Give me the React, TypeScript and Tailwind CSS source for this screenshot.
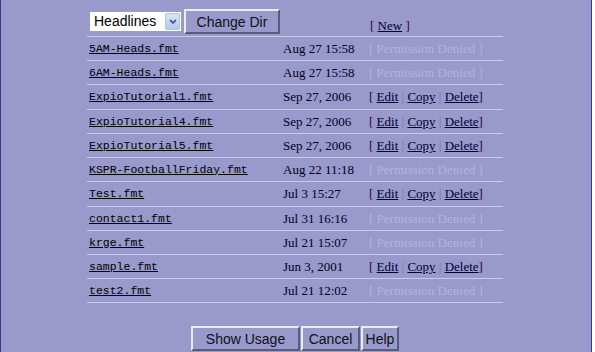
import React from "react";

type Row = { name: string; date: string; editable: boolean };

const rows: Row[] = [
  { name: "5AM-Heads.fmt", date: "Aug 27 15:58", editable: false },
  { name: "6AM-Heads.fmt", date: "Aug 27 15:58", editable: false },
  { name: "ExpioTutorial1.fmt", date: "Sep 27, 2006", editable: true },
  { name: "ExpioTutorial4.fmt", date: "Sep 27, 2006", editable: true },
  { name: "ExpioTutorial5.fmt", date: "Sep 27, 2006", editable: true },
  { name: "KSPR-FootballFriday.fmt", date: "Aug 22 11:18", editable: false },
  { name: "Test.fmt", date: "Jul 3 15:27", editable: true },
  { name: "contact1.fmt", date: "Jul 31 16:16", editable: false },
  { name: "krge.fmt", date: "Jul 21 15:07", editable: false },
  { name: "sample.fmt", date: "Jun 3, 2001", editable: true },
  { name: "test2.fmt", date: "Jul 21 12:02", editable: false },
];

const times = "font-['Liberation_Serif','Times_New_Roman',serif]";
const mono = "font-['Liberation_Mono','Courier_New',monospace]";
const arial = "font-['Liberation_Sans',Arial,sans-serif]";

function Btn({ label, w }: { label: string; w: string }) {
  return (
    <button
      className={`${w} h-[25px] bg-[#9999cc] border-2 border-t-[#ececf8] border-l-[#ececf8] border-b-[#5a5a7a] border-r-[#5a5a7a] ${arial} text-[14px] text-[#111] leading-none flex items-center justify-center`}
    >
      {label}
    </button>
  );
}

export default function App() {
  return (
    <div className="w-[595px] h-[352px] bg-white">
      <div className="w-[592px] h-[352px] bg-[#9999cc] border-l border-r border-[#3a3a8a] flex flex-col">
        <div className="ml-[86px] w-[416px]">
          {/* header row */}
          <div className="h-[37px] flex border-b border-[#cacaea]">
            <div className="w-[196px] flex items-start pt-[9px] pl-[2px]">
              <div className="mt-[2px] w-[93px] h-[21px] bg-white border border-[#a0a0b0] flex items-center relative">
                <span className={`${arial} text-[14px] text-black pl-[4px]`}>Headlines</span>
                <div className="absolute right-[1px] top-[1px] w-[15px] h-[17px] bg-gradient-to-b from-[#d8e4fc] to-[#b4c8f4] border border-[#b0c4ee] rounded-[2px] flex items-center justify-center">
                  <svg width="8" height="6" viewBox="0 0 8 6">
                    <path d="M1 1 L4 4 L7 1" stroke="#4d6185" strokeWidth="1.8" fill="none" />
                  </svg>
                </div>
              </div>
              <div className="ml-[2px]">
                <Btn label="Change Dir" w="w-[96px] h-[23px]" />
              </div>
            </div>
            <div className="w-[86px]" />
            <div className={`flex-1 flex items-end pb-[1px] pl-[1px] ${times} text-[13px]`}>
              <span className="text-[#330033]">[&nbsp;</span>
              <span className="underline text-[#000033]">New</span>
              <span className="text-[#330033]">&nbsp;]</span>
            </div>
          </div>
          {rows.map((r, i) => (
            <div
              key={r.name}
              className={`${i === 2 || i === 6 ? "h-[25px]" : "h-[24px]"} flex items-center border-b border-[#cacaea]`}
            >
              <div className={`w-[196px] pl-[2px] ${mono} text-[11.5px] text-black underline`}>{r.name}</div>
              <div className={`w-[86px] ${times} text-[13px] text-[#000022] whitespace-nowrap`}>{r.date}</div>
              <div className={`flex-1 ${times} text-[13px] whitespace-nowrap`}>
                {r.editable ? (
                  <>
                    <span className="text-[#330033]">[ </span>
                    <span className="underline text-[#000033]">Edit</span>
                    <span className="text-[#7777aa]"> | </span>
                    <span className="underline text-[#000033]">Copy</span>
                    <span className="text-[#7777aa]"> | </span>
                    <span className="underline text-[#000033]">Delete</span>
                    <span className="text-[#330033]">]</span>
                  </>
                ) : (
                  <span className="text-[#b4b4dc]">[ Permission Denied ]</span>
                )}
              </div>
            </div>
          ))}
        </div>
        <div className="mt-[23px] ml-[190px] flex gap-[1px]">
          <Btn label="Show Usage" w="w-[109px]" />
          <Btn label="Cancel" w="w-[59px]" />
          <Btn label="Help" w="w-[38px]" />
        </div>
      </div>
    </div>
  );
}
